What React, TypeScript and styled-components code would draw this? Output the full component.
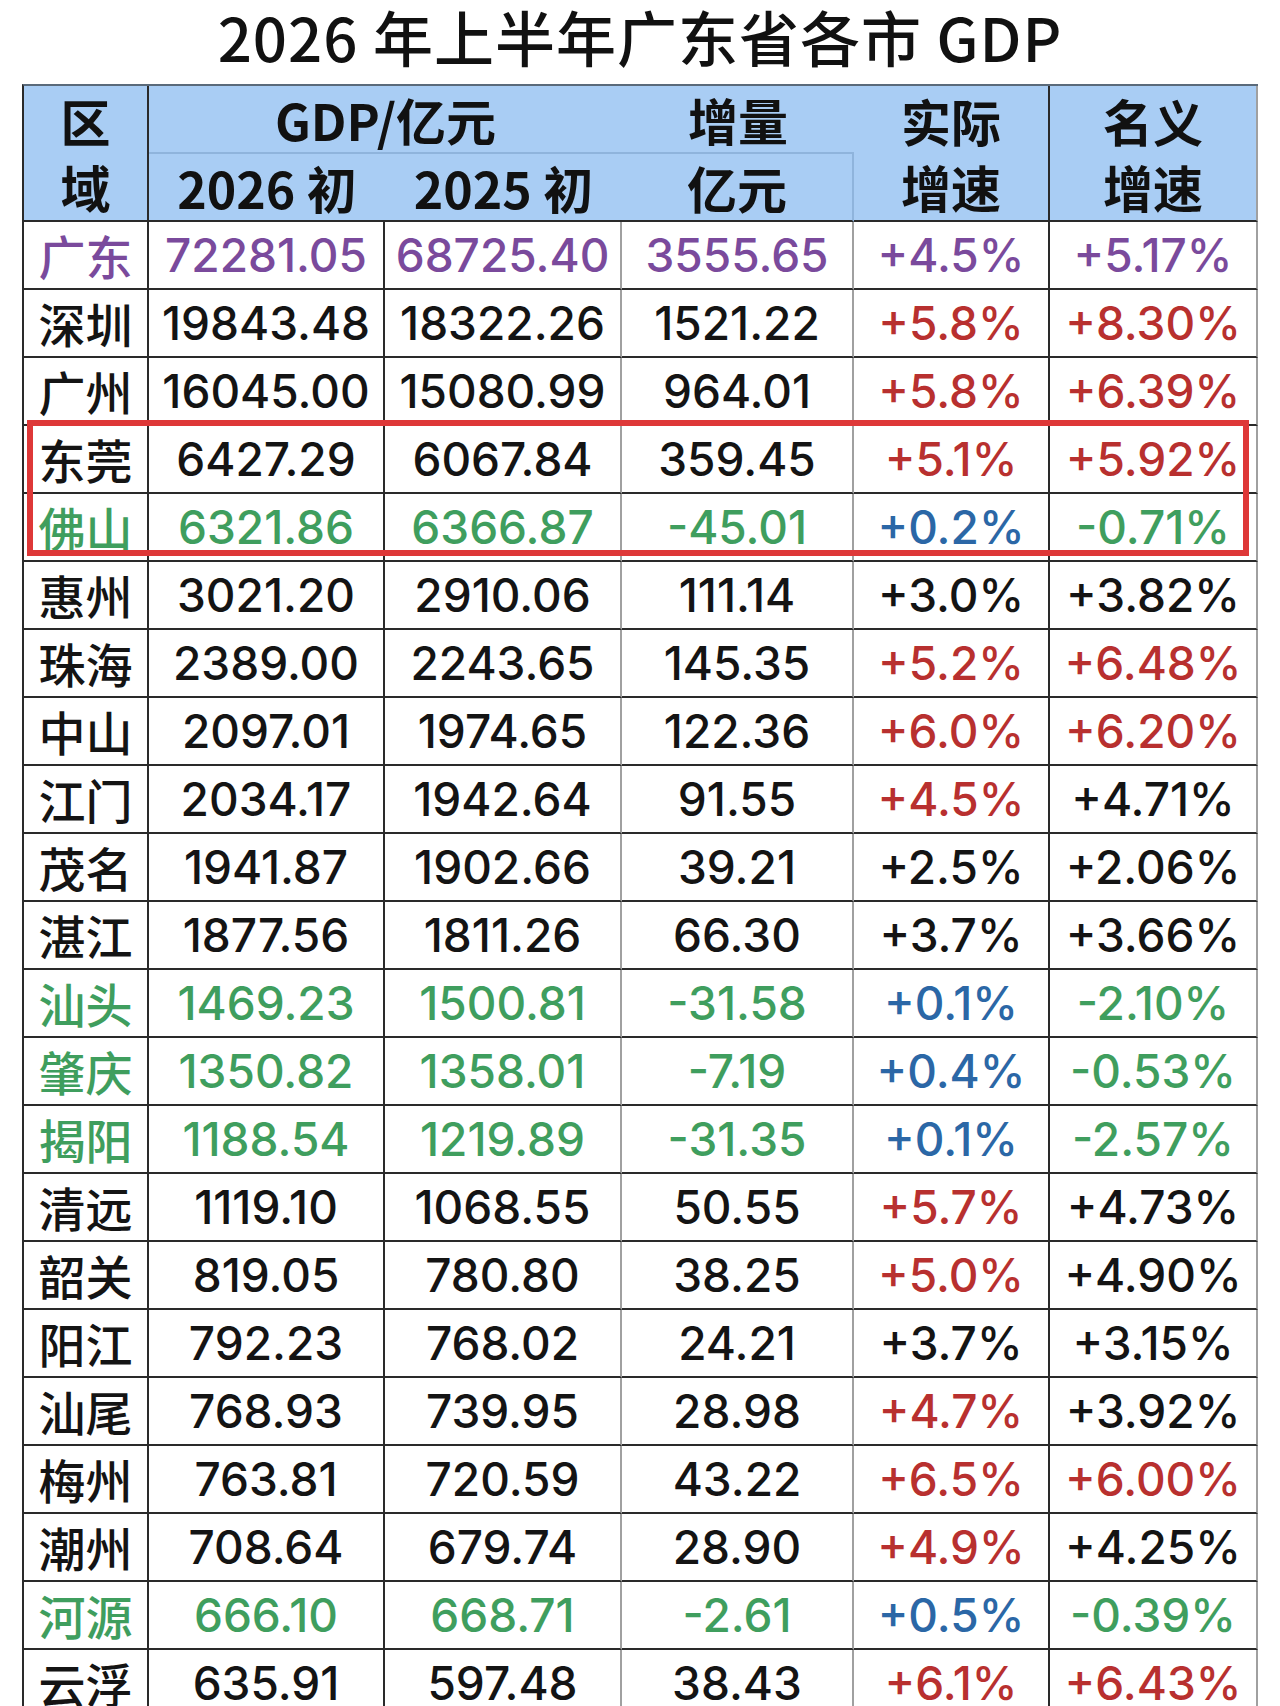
import React from 'react';
import styled, { createGlobalStyle } from 'styled-components';

const GlobalStyle = createGlobalStyle`
  html, body {
    margin: 0;
    padding: 0;
    background: #ffffff;
  }
  body {
    height: 1706px;
    overflow: hidden;
    font-family: Inter, "Noto Sans CJK SC", sans-serif;
  }
`;

const colors = {
  black: '#141414',
  purple: '#7a4a9c',
  red: '#b8302f',
  green: '#3f9e5e',
  blue: '#2b67a6',
  header: '#a9cdf4',
  dark: '#2a2a2a',
  gray: '#a0a0a0',
  box: '#de3838',
};

const Page = styled.div`
  width: 1280px;
  height: 1706px;
  overflow: hidden;
`;

const Title = styled.h1`
  margin: 0;
  height: 84px;
  box-sizing: border-box;
  padding-bottom: 12px;
  display: flex;
  justify-content: center;
  align-items: center;
  font-family: "Noto Sans CJK SC", sans-serif;
  font-size: 60px;
  line-height: 72px;
  font-weight: 500;
  color: #111;
  letter-spacing: 1px;
  white-space: nowrap;
`;

const TableWrap = styled.div`
  position: relative;
  margin-left: 22px;
  width: 1234px;
`;

const Table = styled.table`
  border-spacing: 0;
  table-layout: fixed;
  width: 1234px;
  border-top: 2px solid #5a6a7a;
  border-left: 2px solid ${colors.dark};
`;

const HeadCell = styled.th<{ $rb?: string; $bb?: string }>`
  background: ${colors.header};
  font-family: "Noto Sans CJK SC", sans-serif;
  font-size: 50px;
  font-weight: 700;
  color: #111;
  line-height: 66px;
  padding: 0;
  height: 66px;
  text-align: center;
  vertical-align: middle;
  border-right: ${p => (p.$rb ? `2px solid ${p.$rb}` : 'none')};
  border-bottom: ${p => (p.$bb ? `2px solid ${p.$bb}` : 'none')};
  white-space: pre-line;
`;

const Cell = styled.td<{ $color: string; $rb: string; $cjk?: boolean }>`
  height: 66px;
  padding: 0;
  text-align: center;
  vertical-align: middle;
  line-height: 64px;
  color: ${p => p.$color};
  font-family: ${p =>
    p.$cjk ? '"Noto Sans CJK SC", sans-serif' : 'Inter, "Noto Sans CJK SC", sans-serif'};
  font-size: ${p => (p.$cjk ? '47px' : '46px')};
  font-weight: 500;
  border-right: 2px solid ${p => p.$rb};
  border-bottom: 2px solid ${colors.dark};
  white-space: nowrap;
`;

const HighlightBox = styled.div`
  position: absolute;
  left: 5px;
  top: 336px;
  width: 1222px;
  height: 136px;
  border: 6px solid ${colors.box};
  box-sizing: border-box;
  pointer-events: none;
`;

type Kind = 'p' | 'g' | 'n';
type Row = [string, string, string, string, string, string, Kind, boolean?, boolean?];

const rows: Row[] = [
  ['广东', '72281.05', '68725.40', '3555.65', '+4.5%', '+5.17%', 'p'],
  ['深圳', '19843.48', '18322.26', '1521.22', '+5.8%', '+8.30%', 'n', true, true],
  ['广州', '16045.00', '15080.99', '964.01', '+5.8%', '+6.39%', 'n', true, true],
  ['东莞', '6427.29', '6067.84', '359.45', '+5.1%', '+5.92%', 'n', true, true],
  ['佛山', '6321.86', '6366.87', '-45.01', '+0.2%', '-0.71%', 'g'],
  ['惠州', '3021.20', '2910.06', '111.14', '+3.0%', '+3.82%', 'n'],
  ['珠海', '2389.00', '2243.65', '145.35', '+5.2%', '+6.48%', 'n', true, true],
  ['中山', '2097.01', '1974.65', '122.36', '+6.0%', '+6.20%', 'n', true, true],
  ['江门', '2034.17', '1942.64', '91.55', '+4.5%', '+4.71%', 'n', true],
  ['茂名', '1941.87', '1902.66', '39.21', '+2.5%', '+2.06%', 'n'],
  ['湛江', '1877.56', '1811.26', '66.30', '+3.7%', '+3.66%', 'n'],
  ['汕头', '1469.23', '1500.81', '-31.58', '+0.1%', '-2.10%', 'g'],
  ['肇庆', '1350.82', '1358.01', '-7.19', '+0.4%', '-0.53%', 'g'],
  ['揭阳', '1188.54', '1219.89', '-31.35', '+0.1%', '-2.57%', 'g'],
  ['清远', '1119.10', '1068.55', '50.55', '+5.7%', '+4.73%', 'n', true],
  ['韶关', '819.05', '780.80', '38.25', '+5.0%', '+4.90%', 'n', true],
  ['阳江', '792.23', '768.02', '24.21', '+3.7%', '+3.15%', 'n'],
  ['汕尾', '768.93', '739.95', '28.98', '+4.7%', '+3.92%', 'n', true],
  ['梅州', '763.81', '720.59', '43.22', '+6.5%', '+6.00%', 'n', true, true],
  ['潮州', '708.64', '679.74', '28.90', '+4.9%', '+4.25%', 'n', true],
  ['河源', '666.10', '668.71', '-2.61', '+0.5%', '-0.39%', 'g'],
  ['云浮', '635.91', '597.48', '38.43', '+6.1%', '+6.43%', 'n', true, true],
];

const widths = [125, 236, 237, 232, 196, 208];
const rightBorders = [colors.dark, colors.dark, colors.gray, colors.gray, colors.dark, colors.gray];

function cellColors(row: Row): string[] {
  const [, , , , , , kind, realRed, nomRed] = row;
  if (kind === 'p') return Array(6).fill(colors.purple);
  if (kind === 'g') {
    return [colors.green, colors.green, colors.green, colors.green, colors.blue, colors.green];
  }
  return [
    colors.black,
    colors.black,
    colors.black,
    colors.black,
    realRed ? colors.red : colors.black,
    nomRed ? colors.red : colors.black,
  ];
}

const App: React.FC = () => {
  return (
    <Page>
      <GlobalStyle />
      <Title>2026 年上半年广东省各市 GDP</Title>
      <TableWrap>
        <Table>
          <colgroup>
            {widths.map((w, i) => (
              <col key={i} style={{ width: w }} />
            ))}
          </colgroup>
          <thead>
            <tr>
              <HeadCell rowSpan={2} $rb={colors.dark} $bb={colors.dark}>
                {'区\n域'}
              </HeadCell>
              <HeadCell colSpan={2} $bb="#8fb4dc">
                GDP/亿元
              </HeadCell>
              <HeadCell $bb="#8fb4dc">增量</HeadCell>
              <HeadCell rowSpan={2} $rb={colors.dark} $bb={colors.dark}>
                {'实际\n增速'}
              </HeadCell>
              <HeadCell rowSpan={2} $rb={colors.gray} $bb={colors.dark}>
                {'名义\n增速'}
              </HeadCell>
            </tr>
            <tr>
              <HeadCell $bb={colors.dark}>2026 初</HeadCell>
              <HeadCell $bb={colors.dark}>2025 初</HeadCell>
              <HeadCell $rb="#8fb4dc" $bb={colors.dark}>
                亿元
              </HeadCell>
            </tr>
          </thead>
          <tbody>
            {rows.map(row => {
              const c = cellColors(row);
              return (
                <tr key={row[0]}>
                  {row.slice(0, 6).map((v, i) => (
                    <Cell key={i} $color={c[i]} $rb={rightBorders[i]} $cjk={i === 0}>
                      {v as string}
                    </Cell>
                  ))}
                </tr>
              );
            })}
          </tbody>
        </Table>
        <HighlightBox />
      </TableWrap>
    </Page>
  );
};

export default App;
